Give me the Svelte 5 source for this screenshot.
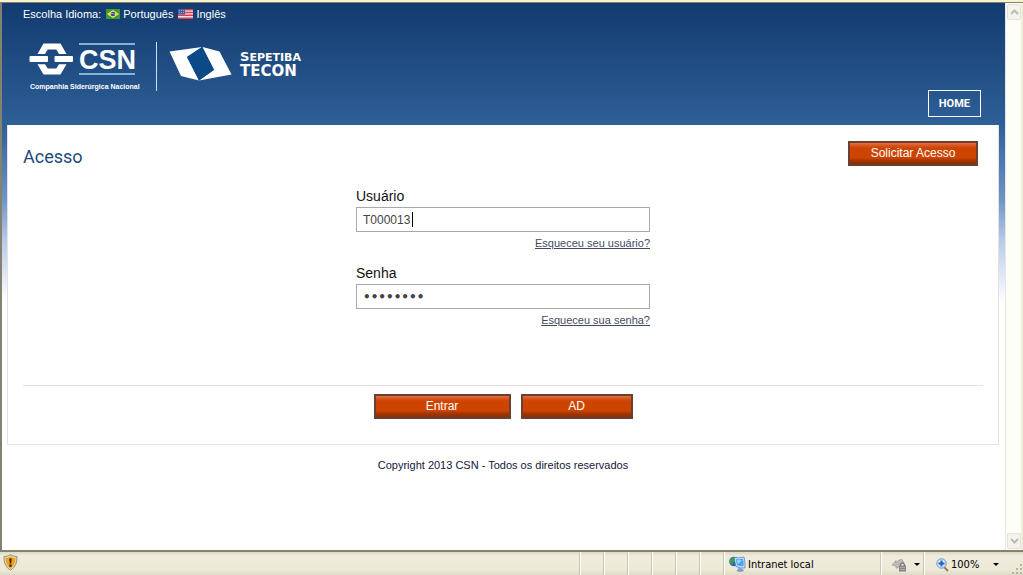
<script>
  let user = $state('T000013');
  let pass = $state('12345678');
  const panes = [0, 1, 2, 3, 4, 5];
</script>

<svelte:head><title>Acesso</title></svelte:head>

<div class="window">
  <div class="view">
    <div class="page">
      <header>
        <div class="lang">
          <span>Escolha Idioma:</span>
          <a href="#pt">
            <svg width="14" height="10" viewBox="0 0 14 10" aria-hidden="true">
              <rect width="14" height="10" fill="#3f9a3a" />
              <path d="M7 1 L13 5 L7 9 L1 5Z" fill="#f2e34c" />
              <circle cx="7" cy="5" r="2.3" fill="#24508f" />
              <path d="M5 4.4 Q7 4 9 5.6" stroke="#dfe8f0" stroke-width=".6" fill="none" />
            </svg>Português</a>
          <a href="#en">
            <svg width="15" height="10" viewBox="0 0 15 10" aria-hidden="true">
              <rect width="15" height="10" fill="#f6dfe2" />
              <path d="M0 .7H15M0 3.5H15M0 6.3H15M0 9.2H15" stroke="#d9404f" stroke-width="1.4" />
              <rect width="7" height="5.5" fill="#4a5fa5" />
              <path d="M1 1.5H6M1 3.5H6" stroke="#a9b4dc" stroke-width=".7" stroke-dasharray="1 1" />
            </svg>Inglês</a>
        </div>
        <div class="brand">
          <svg class="logo" width="292" height="54" viewBox="28 40 292 54" role="img" aria-label="CSN Sepetiba Tecon">
            <g fill="#fff">
              <path d="M37.500 54 L43.500 43.500 H60.500 L66.500 54 H59 L56.300 49.500 H47.700 L45 54Z" />
              <path d="M37.500 64.200 L43.500 74.500 H60.500 L66.500 64.200 H59 L56.300 68.500 H47.700 L45 64.200Z" />
              <rect x="29.500" y="56" width="18.500" height="6" rx="1" />
              <rect x="54.500" y="56" width="18.500" height="6" rx="1" />
              <path d="M169.500 51.500 L202 47 L187 57 L199 80.500 L181 76 Z" />
              <path d="M202.500 47 L219.500 51.500 L231.500 74.500 L199 80.500 L214 70Z" />
            </g>
            <path d="M202 47 L214 69.500 L199 80.500 L187 57Z" fill="#0b4a86" />
            <path d="M79 44H135M79 74H135" stroke="#a9d3f5" stroke-width="1.5" />
            <path d="M156.500 42V91" stroke="#c9e0f5" />
            <text class="csn" x="79" y="69">CSN</text>
            <text class="tag" x="30" y="89">Companhia Siderúrgica Nacional</text>
            <text class="sep" x="240" y="61"><tspan class="cap">S</tspan>EPETIBA</text>
            <text class="tecon" x="240" y="76">TECON</text>
          </svg>
          <a class="home" href="#home">HOME</a>
        </div>
      </header>

      <main>
        <div class="title">
          <h1>Acesso</h1>
          <button class="btn request" type="button">Solicitar Acesso</button>
        </div>
        <form onsubmit={(e) => e.preventDefault()}>
          <div class="fields">
            <label for="user">Usuário</label>
            <div class="box">
              <input id="user" type="text" bind:value={user} />
              <i class="caret"></i>
            </div>
            <a href="#user-help">Esqueceu seu usuário?</a>
            <label for="pass">Senha</label>
            <div class="box">
              <input id="pass" type="password" bind:value={pass} />
            </div>
            <a href="#pass-help">Esqueceu sua senha?</a>
          </div>
          <div class="actions">
            <button class="btn enter" type="submit">Entrar</button>
            <button class="btn ad" type="button">AD</button>
          </div>
        </form>
      </main>
      <footer>Copyright 2013 CSN - Todos os direitos reservados</footer>
    </div>

    <div class="scroll">
      <button type="button" aria-label="Rolar para cima">
        <svg width="9" height="6" viewBox="0 0 9 6"><path d="M1 5 L4.500 1.500 L8 5" /></svg>
      </button>
      <button type="button" aria-label="Rolar para baixo">
        <svg width="9" height="6" viewBox="0 0 9 6"><path d="M1 1 L4.500 4.500 L8 1" /></svg>
      </button>
    </div>
  </div>

  <div class="status">
    <div class="msg">
      <svg width="15" height="17" viewBox="0 0 15 17" aria-hidden="true">
        <path d="M7.500 .7 Q10 2.500 14 2.500 Q14.500 12 7.500 16.300 Q.5 12 1 2.500 Q5 2.500 7.500 .7Z" fill="#e8d5a8" stroke="#9c8f78" />
        <path d="M7.500 2.500 Q9.500 4 12.500 4 Q12.500 11 7.500 14.500 Q2.500 11 2.500 4 Q5.500 4 7.500 2.500Z" fill="#eda11c" />
        <path d="M6.300 4.500 H8.700 L8.200 9.500 H6.800Z M6.400 10.500 H8.600 V12.700 H6.400Z" fill="#3a2408" />
      </svg>
    </div>
    {#each panes as pane (pane)}<div class="pane"></div>{/each}
    <div class="zone">
      <svg width="17" height="17" viewBox="0 0 17 17" aria-hidden="true">
        <circle cx="5" cy="5.500" r="4.800" fill="#2c63a8" />
        <path d="M.8 4 Q3 .3 6.500 1 L6 5 L3.500 6 L4.500 9.500 Q.5 8 .8 4Z" fill="#3fa045" />
        <path d="M5.500 1.500 Q10 2.300 15 1 Q16.500 6 16 12 Q11 12.500 7 10.500 Q5.500 6 5.500 1.500Z" fill="#cfe4fa" stroke="#4c82c8" stroke-width=".8" />
        <path d="M7 3 Q10.500 3.500 14 2.700 Q15 6.500 14.500 10.300 Q11 10.500 8 9.300 Q7 6 7 3Z" fill="#4da4f2" />
        <path d="M8 4 Q11 4.500 13 4 L9 8Z" fill="#a6d6fb" />
        <path d="M9.500 12 L13.500 12.500 L15 15 Q11 17 7.500 15Z" fill="#7fa0cc" />
      </svg>
      <span>Intranet local</span>
    </div>
    <button class="protect" type="button" aria-label="Modo protegido">
      <svg width="17" height="16" viewBox="0 0 17 16" aria-hidden="true">
        <path d="M1 8 L5 3.500 V6 Q7 2 11 2.500 L13 6 Q8 5 7 11 H5 V9Z" fill="#bdbdb8" stroke="#92928c" stroke-width=".6" />
        <path d="M9.500 9 V7.500 Q11.500 4.500 13.500 7.500 V9" fill="none" stroke="#777" stroke-width="1.300" />
        <rect x="8" y="8.500" width="7" height="6" fill="#858585" />
        <path d="M9 10.500H14M9 12.500H14" stroke="#b5b5b5" stroke-width=".8" />
      </svg>
      <i class="arrow"></i>
    </button>
    <button class="zoom" type="button">
      <svg width="13" height="14" viewBox="0 0 13 14" aria-hidden="true">
        <path d="M8 9 L12 13" stroke="#a37a4e" stroke-width="2" />
        <circle cx="5.500" cy="5.500" r="4.700" fill="#d5e9fb" stroke="#6a93c7" />
        <path d="M5.500 2.500 V8.500 M2.500 5.500 H8.500" stroke="#1f62be" stroke-width="2" />
      </svg>
      <span>100%</span>
      <i class="arrow"></i>
    </button>
    <svg class="grip" width="11" height="11" viewBox="0 0 11 11" aria-hidden="true">
      <path d="M8 0h2v2h-2z M4 4h2v2h-2z M8 4h2v2h-2z M0 8h2v2h-2z M4 8h2v2h-2z M8 8h2v2h-2z" fill="#b5b29f" />
    </svg>
  </div>
</div>

<style>
  :global(body) {
    margin: 0;
    background: #ece9d8;
  }
  .window {
    display: flex;
    flex-direction: column;
    min-height: 100vh;
    box-sizing: border-box;
    font: 11px/14px "Liberation Sans", Arial, sans-serif;
    border-top: 2px solid #f6f3cf;
  }
  .view {
    flex: 1;
    display: flex;
    border: solid #85816f;
    border-width: 1px 0 0 2px;
  }
  .page {
    flex: 1;
    padding: 0 6px 0 5px;
    border-right: 1px solid #e6e6ea;
    background: linear-gradient(#123b6f, #2e5f97 122px, #6d93c3 195px, #bccde9 240px, #fff 300px);
  }
  header {
    padding: 4px 18px 8px 16px;
    color: #fff;
  }
  .lang {
    display: flex;
    gap: 5px;
  }
  .lang a {
    display: flex;
    align-items: center;
    gap: 3px;
    color: #fff;
    text-decoration: none;
  }
  .brand {
    display: flex;
    justify-content: space-between;
    align-items: flex-end;
    padding-top: 19px;
  }
  .logo {
    margin: 0 0 23px 5px;
  }
  .logo text {
    fill: #fff;
    font-weight: bold;
  }
  .logo .csn {
    font-size: 27px;
  }
  .logo .tag {
    font-size: 7px;
  }
  .logo .sep {
    font: bold 11px "DejaVu Sans", sans-serif;
  }
  .logo .cap {
    font-size: 13px;
  }
  .logo .tecon {
    font: bold 15px "DejaVu Sans", sans-serif;
  }
  .home {
    padding: 6px 10px 5px;
    border: 1px solid #fff;
    color: #fff;
    font: bold 11px/14px Roboto, sans-serif;
    text-decoration: none;
  }
  main {
    padding: 14px 15px 25px;
    border: 1px solid #e2e2e6;
    border-top: 0;
    background: #fff;
  }
  .title {
    display: flex;
    justify-content: space-between;
    align-items: flex-start;
    padding: 2px 5px 0 0;
  }
  h1 {
    margin: 5px 0 0;
    color: #1c4a7a;
    font: 18px/22px Roboto, sans-serif;
  }
  .btn {
    height: 25px;
    padding: 0 0 1px;
    border: 2px solid #6b4030;
    background: linear-gradient(#e4713f 0, #d4521a 3px, #cc4400 5px, #cc4400 15px, #a83800 17px, #8a2e00);
    color: #fff;
    font: 12px/14px "Liberation Sans", Arial, sans-serif;
  }
  .request {
    width: 130px;
  }
  .enter {
    width: 137px;
  }
  .ad {
    width: 112px;
  }
  .fields {
    display: flex;
    flex-direction: column;
    width: 294px;
    margin: 19px auto 0;
  }
  label {
    font-size: 14px;
    line-height: 18px;
    padding-bottom: 2px;
    color: #111;
  }
  .box {
    position: relative;
    display: flex;
  }
  input {
    flex: 1;
    height: 25px;
    box-sizing: border-box;
    padding: 0 6px;
    border: 1px solid #a9a9a9;
    border-radius: 0;
    outline: 0;
    background: #fff;
    color: #444;
    font: 12px "Liberation Sans", Arial, sans-serif;
  }
  input[type="password"] {
    font-family: "DejaVu Sans", sans-serif;
    font-weight: bold;
  }
  .caret {
    position: absolute;
    left: 56px;
    top: 5px;
    width: 1px;
    height: 15px;
    background: #000;
  }
  .fields a {
    align-self: flex-end;
    padding: 4px 0 14px;
    color: #454a63;
  }
  .actions {
    display: flex;
    justify-content: center;
    gap: 10px;
    margin-top: 44px;
    padding-top: 8px;
    border-top: 1px solid #e2e2e2;
  }
  footer {
    padding-top: 13px;
    text-align: center;
    color: #15153c;
  }
  .scroll {
    display: flex;
    flex-direction: column;
    justify-content: space-between;
    width: 15px;
    padding: 1px 0;
    background: #fefef8;
    border-right: 2px solid #f0f0d8;
  }
  .scroll button {
    display: grid;
    place-items: center;
    width: 14px;
    height: 16px;
    margin: 0 0 0 1px;
    padding: 0;
    border: 1px solid #e3e2d8;
    border-radius: 2px;
    background: #f4f3ec;
  }
  .scroll path {
    fill: none;
    stroke: #bdbbb0;
    stroke-width: 2;
  }
  .status {
    display: flex;
    height: 23px;
    border-top: 2px solid #85836f;
    background: linear-gradient(#dcd9c6, #efecdd 4px, #ece9d8 18px, #dedac5);
    font: 11px/18px "DejaVu Sans Condensed", Tahoma, sans-serif;
    color: #000;
  }
  .msg {
    flex: 1;
    padding: 2px 3px 0;
  }
  .pane,
  .zone,
  .protect,
  .zoom {
    display: flex;
    align-items: center;
    box-sizing: border-box;
    padding: 0;
    border: solid #fff;
    border-width: 0 0 0 1px;
    background: none;
    box-shadow: -1px 0 #cbc7b4;
    font: inherit;
    color: inherit;
  }
  .pane {
    width: 24px;
  }
  .zone {
    width: 157px;
    padding: 2px 0 0 4px;
    gap: 2px;
  }
  .protect {
    width: 43px;
    padding: 2px 0 0 9px;
    gap: 6px;
  }
  .zoom {
    width: 88px;
    padding: 2px 0 0 11px;
    gap: 2px;
  }
  .zoom .arrow {
    margin-left: 12px;
  }
  .arrow {
    border: solid transparent;
    border-top-color: #000;
    border-width: 3px 3px 0;
  }
  .grip {
    align-self: flex-end;
  }
</style>
